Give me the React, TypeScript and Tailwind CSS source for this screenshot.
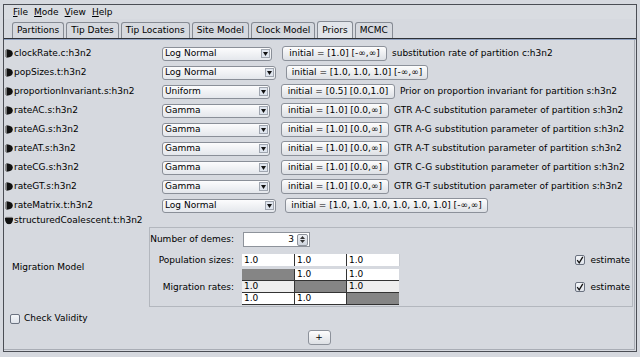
import React from "react";

const Arrow = ({ down = false }: { down?: boolean }) => (
  <svg width="8" height="9" viewBox="0 0 8 9" className={`shrink-0 ml-[1px] mr-[1px] ${down ? "rotate-90" : ""}`}>
    <path d="M1.5 0.3 Q7.8 0.8 7.8 4.5 Q7.8 8.2 1.5 8.7 Z" fill="#111" />
    <path d="M0.2 1.3 L1.6 0.6 L1.6 8.4 L0.2 7.7 Z" fill="#7a7a7a" />
  </svg>
);

const Dropdown = ({ label, w }: { label: string; w: string }) => (
  <div className={`${w} h-[14px] rounded-[3px] border border-[#8a8f98] bg-gradient-to-b from-[#fcfcfd] to-[#e4e7ec] flex items-center pl-[2px] pr-[1px]`}>
    <span className="flex-1 leading-none">{label}</span>
    <div className="w-[9px] h-[9px] border border-[#a0a6b0] bg-[#dfe5ee] flex items-center justify-center">
      <svg width="5" height="4" viewBox="0 0 5 4">
        <path d="M0 0 L5 0 L2.5 4 Z" fill="#111" />
      </svg>
    </div>
  </div>
);

const Btn = ({ text, w }: { text: string; w: string }) => (
  <div className={`${w} h-[15px] rounded-[3px] border border-[#8c919a] bg-gradient-to-b from-[#fdfdfd] to-[#dde0e5] flex items-center justify-center leading-none whitespace-nowrap`}>
    {text}
  </div>
);

type Row = {
  name: string;
  dist: string;
  ddw: string;
  btnMl: string;
  btnW: string;
  init: string;
  desc?: string;
};

const rows: Row[] = [
  { name: "clockRate.c:h3n2", dist: "Log Normal", ddw: "w-[110px]", btnMl: "ml-[10px]", btnW: "w-[105px]", init: "initial = [1.0] [-∞,∞]", desc: "substitution rate of partition c:h3n2" },
  { name: "popSizes.t:h3n2", dist: "Log Normal", ddw: "w-[114px]", btnMl: "ml-[10px]", btnW: "w-[142px]", init: "initial = [1.0, 1.0, 1.0] [-∞,∞]" },
  { name: "proportionInvariant.s:h3n2", dist: "Uniform", ddw: "w-[108px]", btnMl: "ml-[11px]", btnW: "w-[114px]", init: "initial = [0.5] [0.0,1.0]", desc: "Prior on proportion invariant for partition s:h3n2" },
  { name: "rateAC.s:h3n2", dist: "Gamma", ddw: "w-[108px]", btnMl: "ml-[11px]", btnW: "w-[108px]", init: "initial = [1.0] [0.0,∞]", desc: "GTR A-C substitution parameter of partition s:h3n2" },
  { name: "rateAG.s:h3n2", dist: "Gamma", ddw: "w-[108px]", btnMl: "ml-[11px]", btnW: "w-[108px]", init: "initial = [1.0] [0.0,∞]", desc: "GTR A-G substitution parameter of partition s:h3n2" },
  { name: "rateAT.s:h3n2", dist: "Gamma", ddw: "w-[108px]", btnMl: "ml-[11px]", btnW: "w-[108px]", init: "initial = [1.0] [0.0,∞]", desc: "GTR A-T substitution parameter of partition s:h3n2" },
  { name: "rateCG.s:h3n2", dist: "Gamma", ddw: "w-[108px]", btnMl: "ml-[11px]", btnW: "w-[108px]", init: "initial = [1.0] [0.0,∞]", desc: "GTR C-G substitution parameter of partition s:h3n2" },
  { name: "rateGT.s:h3n2", dist: "Gamma", ddw: "w-[108px]", btnMl: "ml-[11px]", btnW: "w-[108px]", init: "initial = [1.0] [0.0,∞]", desc: "GTR G-T substitution parameter of partition s:h3n2" },
  { name: "rateMatrix.t:h3n2", dist: "Log Normal", ddw: "w-[114px]", btnMl: "ml-[9px]", btnW: "w-[203px]", init: "initial = [1.0, 1.0, 1.0, 1.0, 1.0, 1.0] [-∞,∞]" },
];

const tabs = ["Partitions", "Tip Dates", "Tip Locations", "Site Model", "Clock Model", "Priors", "MCMC"];

const Check = ({ checked }: { checked: boolean }) => (
  <div className="w-[10px] h-[10px] rounded-[2px] border border-[#6b7280] bg-gradient-to-b from-[#f4f6f9] to-[#dfe3ea] flex items-center justify-center">
    {checked && (
      <svg width="8" height="8" viewBox="0 0 8 8">
        <path d="M1.2 4.2 L3.2 6.8 L6.8 0.8" stroke="#111" strokeWidth="1.3" fill="none" />
      </svg>
    )}
  </div>
);

const Cell = ({ v, kind }: { v?: string; kind: "w" | "g" | "s" }) => (
  <div
    className={`h-[11px] pl-[2px] flex items-center leading-none ${
      kind === "g" ? "bg-[#858585]" : kind === "s" ? "bg-[#eeeeee]" : "bg-white"
    }`}
  >
    {v}
  </div>
);

export default function App() {
  return (
    <div className="w-[640px] h-[357px] bg-[#d6d9df] pt-[4px] pl-[3px] text-[9px] text-black overflow-hidden" style={{ fontFamily: "'DejaVu Sans', sans-serif" }}>
      <div className="w-[634px] h-[348px] border border-[#4b4e55] flex flex-col">
        {/* menu */}
        <div className="h-[14px] flex items-center pl-[9px] gap-[6px] leading-none bg-[#d9dce1]">
          <span><u>F</u>ile</span>
          <span><u>M</u>ode</span>
          <span><u>V</u>iew</span>
          <span><u>H</u>elp</span>
        </div>
        {/* tabs */}
        <div className="h-[19px] flex items-end pl-[8px] gap-[2px]">
          {tabs.map((t) => (
            <div
              key={t}
              className={`px-[4px] flex items-center leading-none border border-b-0 border-[#868b94] rounded-t-[3px] ${
                t === "Priors" ? "h-[17px] bg-[#e2e5ea]" : "h-[16px] bg-[#d6d9df]"
              }`}
            >
              {t}
            </div>
          ))}
        </div>
        {/* content */}
        <div className="flex-1 border-t border-[#2e3136] flex flex-col">
          <div className="h-[1px] bg-[#8fa0bf]" />
          <div className="flex-1 flex flex-col pt-[4px] border-r border-b border-[#a9adb5] mr-[1px] mb-[1px]">
            {rows.map((r) => (
              <div key={r.name} className="h-[19px] flex items-center">
                <div className="w-[158px] flex items-center">
                  <Arrow />
                  <span className="leading-none">{r.name}</span>
                </div>
                <Dropdown label={r.dist} w={r.ddw} />
                <div className={r.btnMl}>
                  <Btn text={r.init} w={r.btnW} />
                </div>
                {r.desc && <span className="ml-[5px] leading-none whitespace-nowrap">{r.desc}</span>}
              </div>
            ))}
            <div className="h-[11px] flex items-center">
              <Arrow down />
              <span className="leading-none">structuredCoalescent.t:h3n2</span>
            </div>
            <div className="flex mt-[1px]">
              <div className="w-[145px] flex items-center pl-[8px] leading-none">Migration Model</div>
              <div className="w-[484px] h-[80px] border border-[#b3b7be] flex flex-col pt-[4px]">
                <div className="flex items-center h-[15px]">
                  <div className="w-[84px] text-right leading-none">Number of demes:</div>
                  <div className="ml-[9px] w-[67px] h-[15px] border border-[#8e939b] bg-white flex items-center">
                    <span className="flex-1 text-right pr-[3px] leading-none">3</span>
                    <div className="w-[11px] h-[12px] mr-[1px] rounded-[2px] border border-[#8e939b] bg-gradient-to-b from-[#eef1f5] to-[#cfd5de] flex flex-col items-center justify-center gap-[1px]">
                      <svg width="5" height="3" viewBox="0 0 5 3"><path d="M0 3 L5 3 L2.5 0 Z" fill="#333" /></svg>
                      <svg width="5" height="3" viewBox="0 0 5 3"><path d="M0 0 L5 0 L2.5 3 Z" fill="#333" /></svg>
                    </div>
                  </div>
                </div>
                <div className="flex items-center h-[12px] mt-[7px]">
                  <div className="w-[84px] text-right leading-none">Population sizes:</div>
                  <div className="ml-[8px] grid grid-cols-[52px_52px_53px] h-[12px] border-r border-[#c9ccd2]">
                    <div className="bg-white pl-[2px] flex items-center leading-none">1.0</div>
                    <div className="bg-white pl-[2px] flex items-center leading-none border-l border-[#333]">1.0</div>
                    <div className="bg-white pl-[2px] flex items-center leading-none border-l border-[#333]">1.0</div>
                  </div>
                  <div className="flex-1" />
                  <Check checked />
                  <span className="ml-[5px] mr-[2px] leading-none">estimate</span>
                </div>
                <div className="flex items-center h-[34px] mt-[4px]">
                  <div className="w-[84px] text-right leading-none">Migration rates:</div>
                  <div className="ml-[8px] flex flex-col w-[157px] border-b border-[#333]">
                    <div className="grid grid-cols-[52px_52px_53px]">
                      <Cell kind="g" />
                      <div className="border-l border-[#333]"><Cell kind="w" v="1.0" /></div>
                      <div className="border-l border-[#333]"><Cell kind="w" v="1.0" /></div>
                    </div>
                    <div className="grid grid-cols-[52px_52px_53px] border-t border-[#333]">
                      <Cell kind="s" v="1.0" />
                      <div className="border-l border-[#333]"><Cell kind="g" /></div>
                      <div className="border-l border-[#333]"><Cell kind="s" v="1.0" /></div>
                    </div>
                    <div className="grid grid-cols-[52px_52px_53px] border-t border-[#333]">
                      <Cell kind="w" v="1.0" />
                      <div className="border-l border-[#333]"><Cell kind="w" v="1.0" /></div>
                      <div className="border-l border-[#333]"><Cell kind="g" /></div>
                    </div>
                  </div>
                  <div className="flex-1" />
                  <Check checked />
                  <span className="ml-[5px] mr-[2px] leading-none">estimate</span>
                </div>
              </div>
            </div>
            <div className="h-[11px] mt-[6px] flex items-center pl-[6px]">
              <Check checked={false} />
              <span className="ml-[4px] leading-none">Check Validity</span>
            </div>
            <div className="flex justify-center mt-[6px]">
              <div className="w-[23px] h-[15px] rounded-[3px] border border-[#8c919a] bg-gradient-to-b from-[#fdfdfd] to-[#dde0e5] flex items-center justify-center leading-none">
                +
              </div>
            </div>
          </div>
        </div>
      </div>
    </div>
  );
}
